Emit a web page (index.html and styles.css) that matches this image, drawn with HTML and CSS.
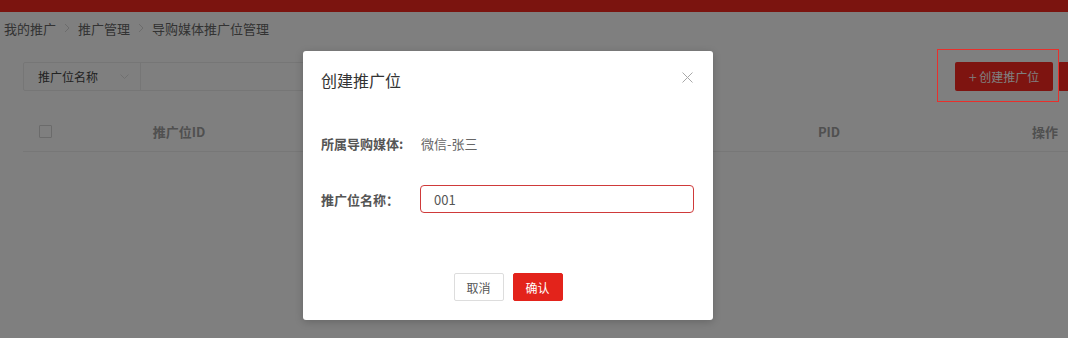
FILE: index.html
```html
<!DOCTYPE html>
<html lang="zh-CN">
<head>
  <meta charset="UTF-8">
  <meta name="viewport" content="width=device-width, initial-scale=1.0">
  <title>导购媒体推广位管理</title>
  <link rel="stylesheet" href="styles.css">
</head>
<body>

  <header class="topbar"></header>

  <div class="crumbs">
    <span>我的推广</span>
    <svg class="crumb-sep" width="6" height="10" viewBox="0 0 6 10"><path d="M1 1l4 4-4 4" fill="none" stroke="#d8d8d8" stroke-width="1"/></svg>
    <span>推广管理</span>
    <svg class="crumb-sep" width="6" height="10" viewBox="0 0 6 10"><path d="M1 1l4 4-4 4" fill="none" stroke="#d8d8d8" stroke-width="1"/></svg>
    <span>导购媒体推广位管理</span>
  </div>

  <main class="content">
    <div class="toolbar">
      <div class="search">
        <div class="search-select">
          <span>推广位名称</span>
          <svg width="9" height="6" viewBox="0 0 9 6"><path d="M0.5 0.5l4 4 4-4" fill="none" stroke="#e0e0e0" stroke-width="1"/></svg>
        </div>
        <input class="search-input" type="text">
      </div>
      <div class="actions">
        <button class="btn-create"><span class="plus">+</span> 创建推广位</button>
        <button class="btn-more" aria-label="批量操作"></button>
      </div>
    </div>

    <div class="table">
      <div class="table-head">
        <div class="cell"><span class="checkbox"></span></div>
        <div class="cell">推广位ID</div>
        <div class="cell">推广位名称</div>
        <div class="cell">PID</div>
        <div class="cell"></div>
        <div class="cell">操作</div>
      </div>
    </div>
  </main>

  <div class="mask"></div>

  <div class="modal">
    <div class="modal-header">
      <h3>创建推广位</h3>
      <svg class="modal-close" width="11" height="11" viewBox="0 0 11 11"><path d="M0.5 0.5l10 10M10.5 0.5l-10 10" stroke="#a8a8a8" stroke-width="1"/></svg>
    </div>
    <div class="modal-body">
      <div class="form-row">
        <label>所属导购媒体:</label>
        <span class="form-value">微信-张三</span>
      </div>
      <div class="form-row">
        <label for="pname">推广位名称：</label>
        <input id="pname" class="form-input" type="text" value="001">
      </div>
    </div>
    <div class="modal-footer">
      <button class="btn-cancel">取消</button>
      <button class="btn-ok">确认</button>
    </div>
  </div>

  <div class="highlight"></div>

</body>
</html>
```

FILE: styles.css
```css
html, body {
  margin: 0;
  padding: 0;
  overflow: hidden;
}

body {
  font-family: "Noto Sans CJK SC", "Noto Sans", sans-serif;
  background: #fff;
  color: #666;
  width: 1068px;
  height: 338px;
  position: relative;
}

.topbar {
  height: 12px;
  background: #f6281f;
}

.crumbs {
  display: flex;
  align-items: center;
  gap: 8px;
  height: 32px;
  padding-left: 4px;
  font-size: 13px;
  color: #666;
}

.content {
  width: 1090px;
  padding: 18px 0 0 23px;
}

.toolbar {
  display: flex;
  align-items: center;
  height: 29px;
  margin-bottom: 20px;
}

.search {
  display: flex;
  height: 27px;
  border: 1px solid #ececec;
  border-radius: 2px;
  width: 440px;
}

.search-select {
  display: flex;
  align-items: center;
  justify-content: space-between;
  width: 91px;
  padding: 0 11px 0 14px;
  border-right: 1px solid #ececec;
  font-size: 12px;
  color: #444;
}

.search-input {
  flex: 1;
  border: none;
  outline: none;
}

.actions {
  margin-left: auto;
  display: flex;
  gap: 5px;
}

.actions button {
  height: 29px;
  border: none;
  border-radius: 2px;
  background: #fc2820;
  color: #fff;
  font-family: inherit;
  font-size: 12px;
  padding: 0;
}

.btn-create {
  width: 98px;
}

.btn-create .plus {
  font-size: 15px;
  font-weight: 300;
  vertical-align: -1px;
}

.btn-more {
  width: 55px;
}

.table-head {
  display: grid;
  grid-template-columns: 44px 224px 1fr 160px 81px 110px;
  height: 40px;
  border-bottom: 1px solid #eee;
  font-size: 13px;
  font-weight: bold;
  color: #a0a0a0;
  width: 1077px;
}

.table-head .cell {
  display: flex;
  align-items: center;
  justify-content: center;
}

.checkbox {
  width: 11px;
  height: 11px;
  border: 1px solid #d6d6d6;
  border-radius: 1px;
}

.mask {
  position: absolute;
  inset: 0;
  background: rgba(0, 0, 0, 0.5);
}

.modal {
  position: absolute;
  left: 303px;
  top: 51px;
  width: 410px;
  height: 269px;
  background: #fff;
  border-radius: 3px;
  box-shadow: 0 2px 8px rgba(0, 0, 0, 0.2);
  box-sizing: border-box;
  padding: 0 18px;
  display: flex;
  flex-direction: column;
}

.modal-header {
  display: flex;
  align-items: center;
  justify-content: space-between;
  height: 58px;
}

.modal-header h3 {
  margin: 0;
  font-size: 16px;
  font-weight: normal;
  color: #333;
}

.modal-close {
  margin-right: 2px;
  margin-top: -6px;
}

.modal-body {
  display: flex;
  flex-direction: column;
  gap: 28px;
  padding-top: 20px;
}

.form-row {
  display: flex;
  align-items: center;
  height: 28px;
}

.form-row label {
  width: 99px;
  font-size: 13px;
  font-weight: bold;
  color: #555;
}

.form-value {
  font-size: 13px;
  color: #666;
  padding-left: 1px;
}

.form-input {
  width: 274px;
  height: 28px;
  box-sizing: border-box;
  border: 1px solid #cf3a3a;
  border-radius: 4px;
  padding: 0 13px;
  font-family: inherit;
  font-size: 13px;
  color: #555;
  outline: none;
}

.modal-footer {
  display: flex;
  justify-content: center;
  gap: 9px;
  margin-top: 60px;
}

.modal-footer button {
  width: 50px;
  height: 28px;
  border-radius: 2px;
  font-family: inherit;
  font-size: 12px;
  padding: 0;
}

.btn-cancel {
  background: #fff;
  border: 1px solid #ddd;
  color: #555;
}

.btn-ok {
  background: #e3231b;
  border: 1px solid #e3231b;
  color: #fff;
}

.highlight {
  position: absolute;
  left: 937px;
  top: 49px;
  width: 120px;
  height: 51px;
  border: 1px solid #e8302c;
}
```
